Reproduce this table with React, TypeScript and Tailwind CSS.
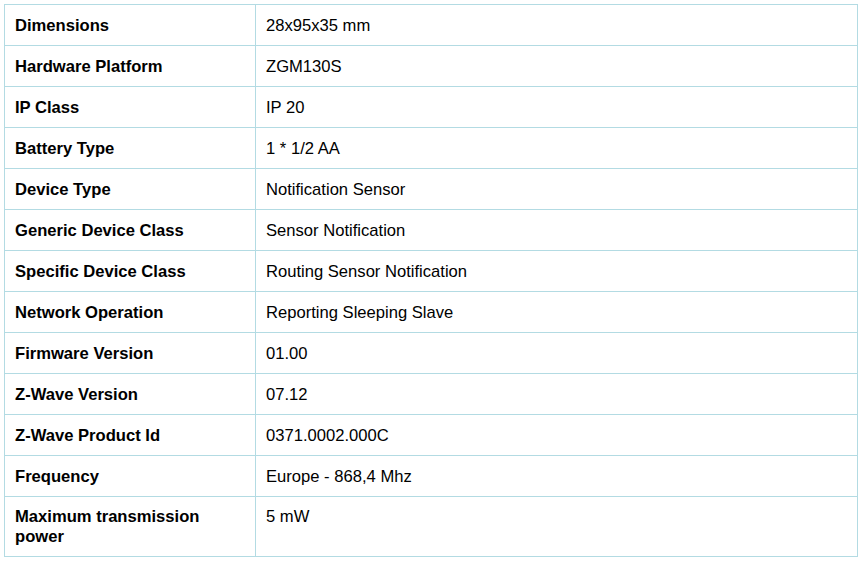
import React from "react";

const rows: [string, string][] = [
  ["Dimensions", "28x95x35 mm"],
  ["Hardware Platform", "ZGM130S"],
  ["IP Class", "IP 20"],
  ["Battery Type", "1 * 1/2 AA"],
  ["Device Type", "Notification Sensor"],
  ["Generic Device Class", "Sensor Notification"],
  ["Specific Device Class", "Routing Sensor Notification"],
  ["Network Operation", "Reporting Sleeping Slave"],
  ["Firmware Version", "01.00"],
  ["Z-Wave Version", "07.12"],
  ["Z-Wave Product Id", "0371.0002.000C"],
  ["Frequency", "Europe - 868,4 Mhz"],
  ["Maximum transmission power", "5 mW"],
];

export default function App() {
  return (
    <div className="w-[861px] h-[561px] bg-white p-[4px] font-['Liberation_Sans',Arial,sans-serif] text-[16.6px] leading-[20px] text-black">
      <div className="w-[854px] border border-[#b3dbe3] flex flex-col">
        {rows.map(([k, v], i) => {
          const last = i === rows.length - 1;
          return (
            <div
              key={k}
              className={
                "flex " +
                (last ? "h-[59px] pt-[10px]" : "h-[41px] pt-[11px] border-b border-[#b3dbe3]")
              }
            >
              <div className="w-[251px] shrink-0 -mt-[11px] pt-[11px] border-r border-[#b3dbe3] font-bold pl-[10px] pr-[40px]">
                {k}
              </div>
              <div className="flex-1 pl-[10px]">{v}</div>
            </div>
          );
        })}
      </div>
    </div>
  );
}
